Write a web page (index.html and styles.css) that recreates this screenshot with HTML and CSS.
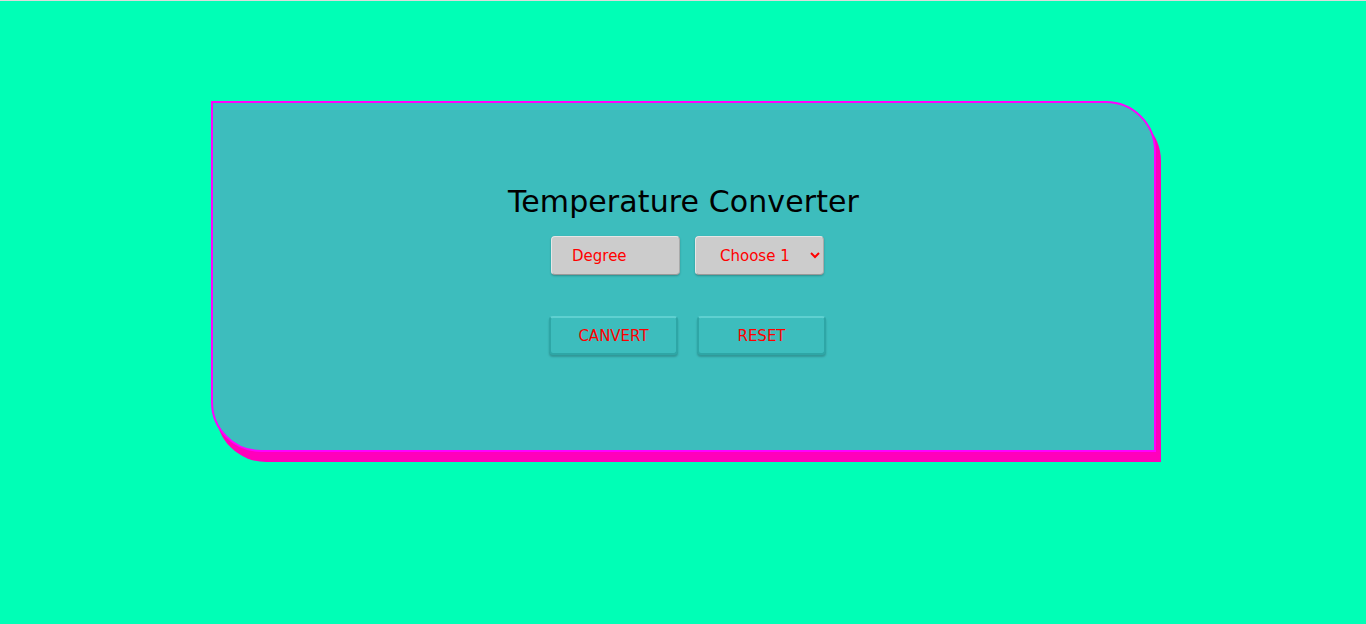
FILE: index.html
```html
<!DOCTYPE html>
<html>
<head>
<meta charset="utf-8">
<link rel="stylesheet" href="styles.css">
</head>
<body>
<main class="page">
  <section class="card">
    <h1 class="title">Temperature Converter</h1>
    <div class="row inputs">
      <input class="field" type="text" placeholder="Degree">
      <select class="field select">
        <option>Choose 1</option>
      </select>
    </div>
    <div class="row buttons">
      <button class="btn">CANVERT</button>
      <button class="btn">RESET</button>
    </div>
  </section>
</main>
</body>
</html>
```
FILE: styles.css
```css
html, body {
  margin: 0;
  padding: 0;
}
body {
  background: #00ffb6;
  border-top: 1px solid #dcdcdc;
  font-family: "DejaVu Sans", "Open Sans", sans-serif;
  height: 623px;
}
.page {
  padding-top: 100px;
  padding-left: 211px;
}
.card {
  box-sizing: border-box;
  width: 945px;
  height: 351px;
  background: #3dbdbd;
  border: 2px solid #ff00ff;
  border-radius: 0 50px 0 50px;
  box-shadow: 5px 10px 0 #ff00bb;
  display: flex;
  flex-direction: column;
  align-items: center;
  padding-top: 82px;
}
.title {
  margin: 0;
  font-weight: normal;
  font-size: 30px;
  letter-spacing: 0.1px;
  color: #000;
  line-height: 34px;
}
.row {
  display: flex;
  justify-content: center;
  margin-left: 8px;
}
.inputs {
  margin-top: 17px;
  gap: 15px;
}
.field {
  box-sizing: border-box;
  width: 129px;
  height: 39px;
  background: #cccccc;
  border: 1px solid #e6e6e6;
  border-bottom-color: #999;
  border-right-color: #aaa;
  border-radius: 4px;
  box-shadow: 0 1px 2px rgba(0,0,0,0.25);
  font-family: inherit;
  font-size: 15px;
  color: #ff0000;
  padding: 0 0 0 20px;
  outline: none;
}
.field::placeholder {
  color: #ff0000;
  opacity: 1;
}
.select {
  padding-left: 20px;
}
.buttons {
  margin-top: 41px;
  gap: 19px;
}
.btn {
  box-sizing: border-box;
  width: 129px;
  height: 39px;
  background: #3dbdbd;
  border: 2px solid #2ea6a6;
  border-top-color: #5fd0d0;
  border-radius: 4px;
  box-shadow: 0 2px 2px rgba(0,0,0,0.2);
  font-family: inherit;
  font-size: 15px;
  color: #ff0000;
  cursor: pointer;
}
```
